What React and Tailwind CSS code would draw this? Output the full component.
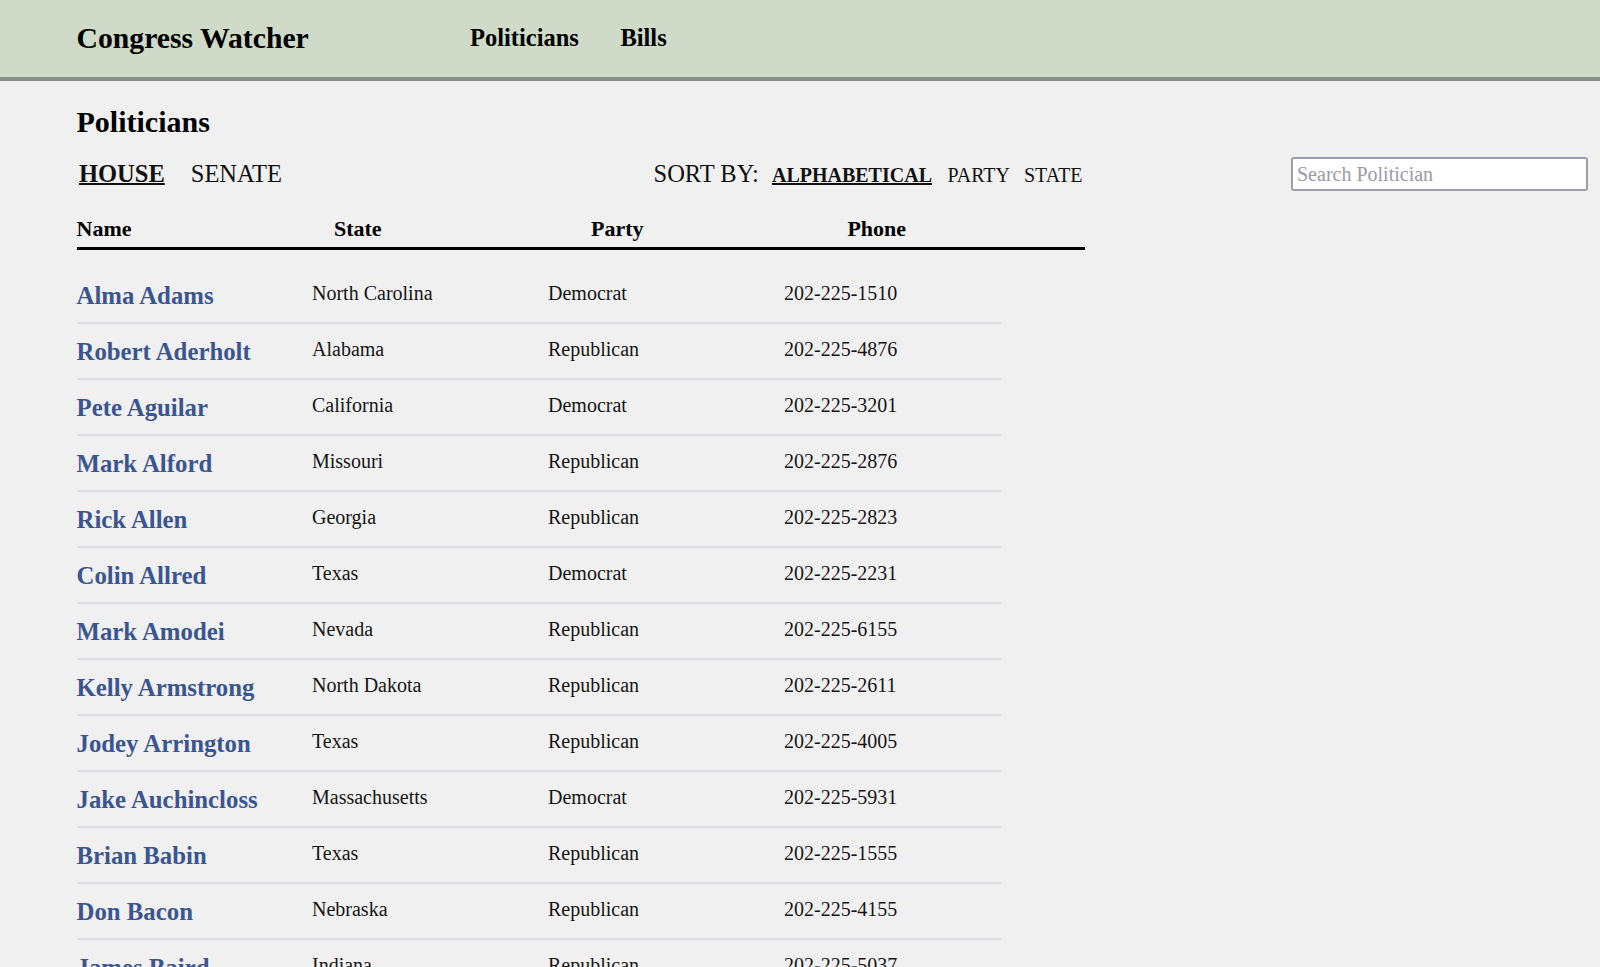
import React from 'react';

const politicians = [
  ['Alma Adams', 'North Carolina', 'Democrat', '202-225-1510'],
  ['Robert Aderholt', 'Alabama', 'Republican', '202-225-4876'],
  ['Pete Aguilar', 'California', 'Democrat', '202-225-3201'],
  ['Mark Alford', 'Missouri', 'Republican', '202-225-2876'],
  ['Rick Allen', 'Georgia', 'Republican', '202-225-2823'],
  ['Colin Allred', 'Texas', 'Democrat', '202-225-2231'],
  ['Mark Amodei', 'Nevada', 'Republican', '202-225-6155'],
  ['Kelly Armstrong', 'North Dakota', 'Republican', '202-225-2611'],
  ['Jodey Arrington', 'Texas', 'Republican', '202-225-4005'],
  ['Jake Auchincloss', 'Massachusetts', 'Democrat', '202-225-5931'],
  ['Brian Babin', 'Texas', 'Republican', '202-225-1555'],
  ['Don Bacon', 'Nebraska', 'Republican', '202-225-4155'],
  ['James Baird', 'Indiana', 'Republican', '202-225-5037'],
  ['Troy Balderson', 'Ohio', 'Republican', '202-225-5355'],
  ['Jim Banks', 'Indiana', 'Republican', '202-225-4436'],
];

const NavBar = () => (
  <header className="h-[81px] bg-[#cfdbc8] border-b-4 border-[#878f87] flex items-start pl-[76.5px]">
    <div className="w-[393.5px] mt-[24px] text-[29.7px] leading-none font-bold text-black">
      Congress Watcher
    </div>
    <nav className="flex gap-[41.5px] mt-[26.3px] text-[24.5px] leading-none font-bold text-black">
      <span>Politicians</span>
      <span>Bills</span>
    </nav>
  </header>
);

const Toolbar = () => (
  <div className="flex items-center h-[33.5px] mt-[20.4px]">
    {/* chamber tabs */}
    <div className="w-[577px] flex items-baseline gap-[26px] pl-[2.5px] text-[24.5px] leading-none text-[#111]">
      <span className="font-bold underline decoration-2">HOUSE</span>
      <span>SENATE</span>
    </div>

    {/* sort options */}
    <div className="flex items-baseline text-[#111] leading-none">
      <span className="text-[24.5px] mr-[13px]">SORT BY:</span>
      <span className="text-[20px] font-bold underline decoration-2 mr-[15.5px]">ALPHABETICAL</span>
      <span className="text-[20px] mr-[14px]">PARTY</span>
      <span className="text-[20px]">STATE</span>
    </div>

    <input
      type="text"
      placeholder="Search Politician"
      className="ml-auto w-[297px] h-[33.5px] bg-white border-2 border-[#9c9fab] rounded-[3px] pl-[4.5px] text-[20px] text-[#111] placeholder:text-[#9a9aa6] outline-none"
      style={{ fontFamily: '"Liberation Serif", serif' }}
    />
  </div>
);

const TableHeader = () => (
  <div className="w-[1008px] grid grid-cols-[151.5px_259.5px_259.5px_259.5px] pt-[27.6px] pb-[6.4px] border-b-[3px] border-black text-[22px] leading-none font-bold text-black">
    <div>Name</div>
    <div className="text-center">State</div>
    <div className="text-center">Party</div>
    <div className="text-center">Phone</div>
  </div>
);

const Row = ({ name, state, party, phone }) => (
  <div className="w-[924.5px] h-[56px] grid grid-cols-[235.5px_236px_236px_217px] items-start border-b-2 border-[#dcdce2]">
    <a className="pt-[15.6px] text-[24.8px] leading-none font-bold text-[#3b5590] cursor-pointer">{name}</a>
    <div className="pt-[15px] text-[20px] leading-none text-[#151515]">{state}</div>
    <div className="pt-[15px] text-[20px] leading-none text-[#151515]">{party}</div>
    <div className="pt-[15px] text-[20px] leading-none text-[#151515]">{phone}</div>
  </div>
);

export default function App() {
  return (
    <div
      className="min-h-screen bg-[#f0f0f0]"
      style={{ fontFamily: '"Liberation Serif", "Times New Roman", serif' }}
    >
      <NavBar />

      <main className="pl-[76.5px] pr-[12.5px] pb-10">
        <h1 className="mt-[25.9px] text-[30px] leading-none font-bold text-black">Politicians</h1>

        <Toolbar />
        <TableHeader />

        <div className="mt-[18.6px]">
          {politicians.map(([name, state, party, phone]) => (
            <Row key={name} name={name} state={state} party={party} phone={phone} />
          ))}
        </div>
      </main>
    </div>
  );
}
